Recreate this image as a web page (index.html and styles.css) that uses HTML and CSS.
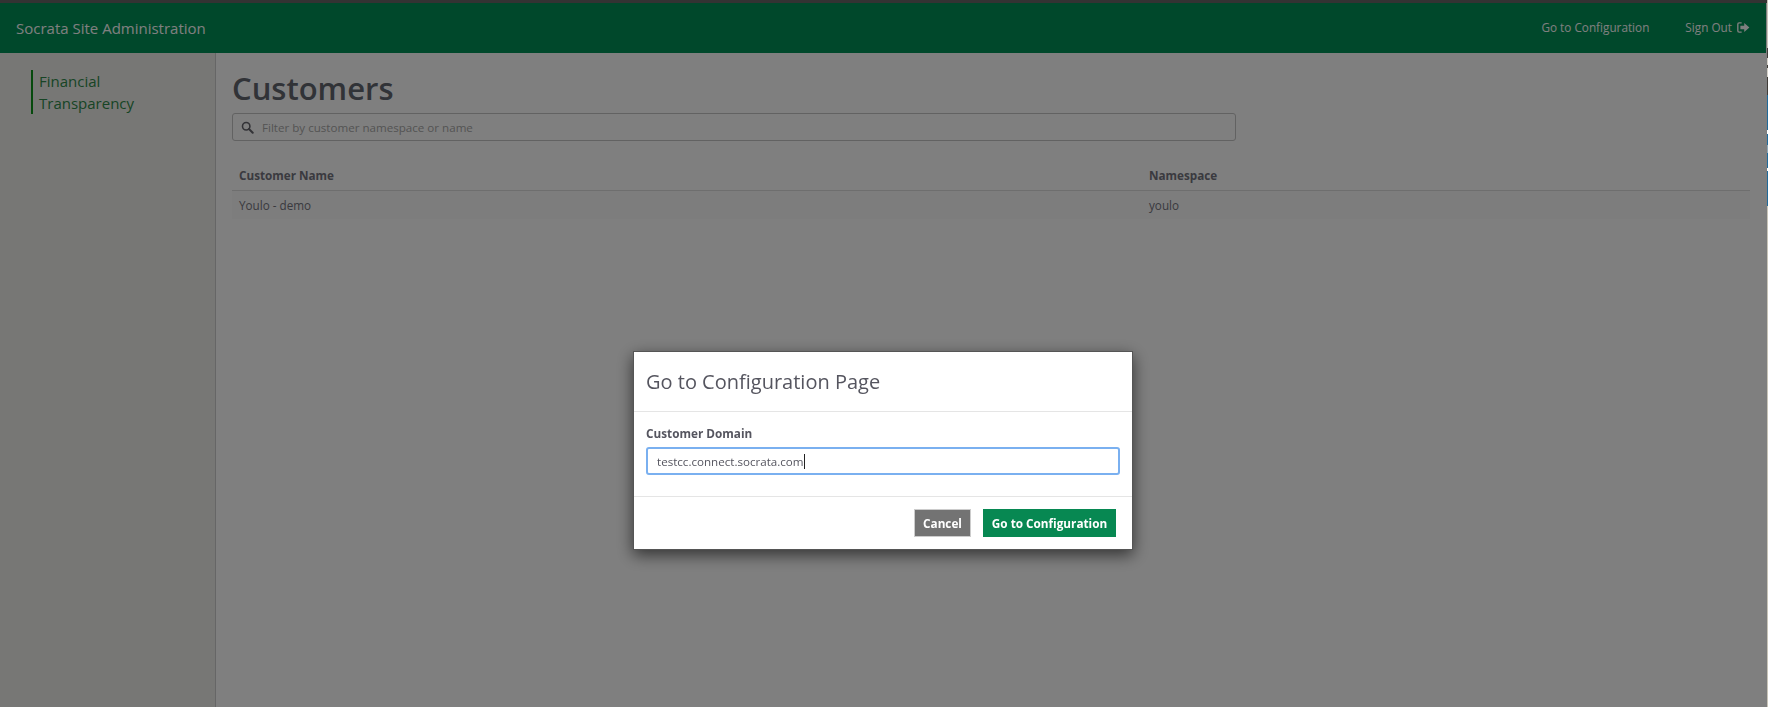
FILE: index.html
```html
<!DOCTYPE html>
<html lang="en">
  <head>
    <meta charset="UTF-8" />
    <meta name="viewport" content="width=device-width, initial-scale=1.0" />
    <title>Socrata Site Administration</title>
    <link rel="stylesheet" href="styles.css">
  </head>

  <body>
    <header class="topbar">
      <a href="#" class="brand">Socrata Site Administration</a>
      <nav class="topnav">
        <a href="#">Go to Configuration</a>
        <a href="#" class="signout">Sign Out
          <svg class="signout-icon" viewBox="0 0 14 12" width="13" height="11">
            <path d="M5 1H2.2C1.3 1 .8 1.6.8 2.4v7.2c0 .8.5 1.4 1.4 1.4H5" fill="none" stroke="currentColor" stroke-width="1.5" />
            <path d="M3.6 4.2h4.2V1.2L13.4 6 7.8 10.8V7.8H3.6z" fill="currentColor" />
          </svg>
        </a>
      </nav>
    </header>

    <div class="layout">
      <aside class="sidebar">
        <a href="#" class="side-link">Financial Transparency</a>
      </aside>
      <main class="content">
        <h1>Customers</h1>
        <div class="filter">
          <svg class="filter-icon" viewBox="0 0 14 14" width="13" height="13">
            <circle cx="5.6" cy="5.6" r="4" fill="none" stroke="currentColor" stroke-width="1.7" />
            <path d="M8.6 8.6l4 4" fill="none" stroke="currentColor" stroke-width="2.2" stroke-linecap="round" />
          </svg>
          <span>Filter by customer namespace or name</span>
        </div>
        <table class="customers">
          <thead>
            <tr><th>Customer Name</th><th>Namespace</th></tr>
          </thead>
          <tbody>
            <tr><td>Youlo - demo</td><td>youlo</td></tr>
          </tbody>
        </table>
      </main>
    </div>

    <div class="overlay">
      <div class="modal">
        <h2>Go to Configuration Page</h2>
        <div class="modal-body">
          <label>Customer Domain</label>
          <div class="domain-input"><span>testcc.connect.socrata.com</span><i class="caret"></i></div>
        </div>
        <div class="modal-footer">
          <button class="btn-cancel">Cancel</button>
          <button class="btn-go">Go to Configuration</button>
        </div>
      </div>
    </div>

    <div class="window-edge"></div>
  </body>
</html>
```

FILE: styles.css
```css
* {
  box-sizing: border-box;
}

html,
body {
  height: 100%;
  margin: 0;
  overflow: hidden;
}

body {
  display: flex;
  flex-direction: column;
  font-family: "Open Sans", sans-serif;
  font-size: 12px;
  color: #74747e;
  background-color: #ffffff;
  border-top: 3px solid #666666;
  padding-right: 1px;
}

a {
  text-decoration: none;
}

.topbar {
  display: flex;
  justify-content: space-between;
  align-items: center;
  height: 50px;
  margin-right: 1px;
  padding: 0 16px;
  background-color: #009056;
}

.brand {
  color: #ffffff;
  font-size: 15px;
}

.topnav {
  display: flex;
  gap: 36px;
  margin-top: -2px;
}

.topnav a {
  color: #ffffff;
  font-size: 11.75px;
}

.signout-icon {
  margin-left: 2px;
  vertical-align: -1px;
}

.layout {
  display: flex;
  flex: 1;
}

.sidebar {
  width: 216px;
  padding: 17px 0 0 31px;
  background-color: #eeeeea;
  border-right: 1px solid #cccccc;
}

.side-link {
  display: block;
  width: 120px;
  padding-left: 6px;
  border-left: 2px solid #0c941a;
  color: #2f8a4a;
  font-size: 15px;
  line-height: 22px;
}

.content {
  flex: 1;
  padding: 14px 17px 0 16px;
}

h1 {
  margin: 0 0 4px;
  font-size: 31px;
  font-weight: 600;
  line-height: 42px;
  color: #62666f;
}

.filter {
  display: flex;
  align-items: center;
  gap: 8px;
  width: 1004px;
  height: 28px;
  padding-left: 8px;
  border: 1px solid #c4c4c4;
  border-radius: 3px;
  color: #a8a8a8;
  font-size: 11.6px;
}

.filter-icon {
  color: #66666e;
}

.customers {
  width: 100%;
  margin-top: 20px;
  border-collapse: collapse;
  font-size: 11.7px;
}

.customers th,
.customers td {
  padding: 0 7px;
  text-align: left;
}

.customers th {
  height: 29px;
  width: 910px;
  border-bottom: 1px solid #dcdcdc;
  font-weight: 700;
}

.customers th:last-child {
  width: auto;
}

.customers td {
  height: 29px;
  background-color: #fafafa;
}

.overlay {
  position: fixed;
  top: 0;
  left: 0;
  width: calc(100% - 1px);
  height: 100%;
  background-color: rgba(0, 0, 0, 0.5);
}

.modal {
  position: absolute;
  top: 351px;
  left: 633px;
  width: 500px;
  height: 199px;
  background-color: #ffffff;
  box-shadow: 0 5px 15px rgba(0, 0, 0, 0.6);
  border: 1px solid #555555;
  color: #55555f;
}

.modal h2 {
  height: 60px;
  margin: 0;
  padding: 0 12px;
  border-bottom: 1px solid #e5e5e5;
  font-size: 20px;
  font-weight: 400;
  line-height: 60px;
}

.modal-body {
  height: 85px;
  padding: 13px 12px 0;
  border-bottom: 1px solid #e5e5e5;
}

.modal-body label {
  display: block;
  margin-bottom: 5px;
  font-size: 11.75px;
  font-weight: 700;
  line-height: 17px;
}

.domain-input {
  display: flex;
  align-items: center;
  height: 28px;
  padding-left: 9px;
  border: 2px solid #7ab0f0;
  border-radius: 3px;
  font-size: 11.6px;
}

.caret {
  width: 1px;
  height: 15px;
  background-color: #222222;
}

.modal-footer {
  display: flex;
  justify-content: flex-end;
  gap: 12px;
  padding: 12px 16px 0;
}

.modal-footer button {
  height: 28px;
  border: 1px solid #cccccc;
  font-family: "Open Sans", sans-serif;
  font-size: 11.75px;
  font-weight: 700;
  color: #ffffff;
}

.btn-cancel {
  width: 57px;
  background-color: #737373;
}

.modal-footer .btn-go {
  width: 133px;
  border-color: #078852;
  background-color: #078852;
}

/* sliver of the window behind the browser */
.window-edge {
  position: fixed;
  top: 0;
  right: 0;
  width: 1px;
  height: 100%;
  background: linear-gradient(
    to bottom,
    #c8c4b8 0 48px,
    #403c38 48px 58px,
    #d4d0c8 58px 65px,
    #403c38 65px 68px,
    #d4d0c8 68px 77px,
    #403c38 77px 95px,
    #206a9a 95px 130px,
    #ffffff 130px 134px,
    #206a9a 134px 145px,
    #8fa8b8 145px 153px,
    #206a9a 153px 168px,
    #ffffff 168px 171px,
    #206a9a 171px 206px,
    #c8c4b8 206px
  );
}
```
